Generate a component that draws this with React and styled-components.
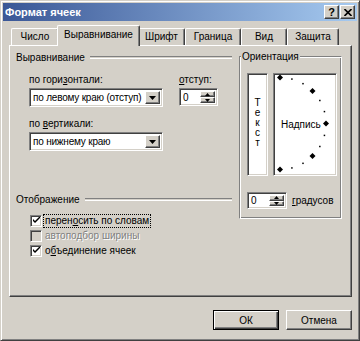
import React from "react";
import styled, { createGlobalStyle } from "styled-components";

const GlobalStyle = createGlobalStyle`
  html, body { margin: 0; padding: 0; background: #d4d0c8; }
  body {
    font-family: "Liberation Sans", Arial, sans-serif;
    font-size: 10px;
    color: #000;
  }
`;

const raised = `
  border: 1px solid;
  border-color: #fff #404040 #404040 #fff;
  box-shadow: inset -1px -1px #808080;
`;

const sunken = `
  border: 1px solid;
  border-color: #808080 #fff #fff #808080;
  box-shadow: inset 1px 1px #404040, inset -1px -1px #d4d0c8;
`;

const Window = styled.div`
  box-sizing: border-box;
  width: 360px;
  height: 341px;
  background: #d4d0c8;
  border: 1px solid;
  border-color: #d4d0c8 #404040 #404040 #d4d0c8;
  box-shadow: inset 1px 1px #fff, inset -1px -1px #808080;
  padding: 2px;
  display: flex;
  flex-direction: column;
`;

const TitleBar = styled.div`
  height: 18px;
  flex: 0 0 18px;
  display: flex;
  align-items: center;
  padding: 0 2px 0 2px;
  background: linear-gradient(to right, #3a5796, #a6caf0);
`;

const Title = styled.div`
  flex: 1;
  color: #fff;
  font-weight: bold;
  font-size: 11px;
`;

const CaptionButtons = styled.div`
  display: flex;
  gap: 1px;
`;

const CaptionButton = styled.div`
  box-sizing: border-box;
  width: 15px;
  height: 14px;
  background: #d4d0c8;
  ${raised}
  display: flex;
  align-items: center;
  justify-content: center;
  font-weight: bold;
  font-size: 11px;
  line-height: 1;
`;

const Body = styled.div`
  flex: 1;
  display: flex;
  flex-direction: column;
  padding: 4px 5px 0 6px;
`;

const TabRow = styled.div`
  position: relative;
  z-index: 1;
  height: 20px;
  display: flex;
  align-items: flex-end;
  padding-left: 2px;
`;

const Tab = styled.div`
  box-sizing: border-box;
  width: ${(p) => p.$w}px;
  height: ${(p) => (p.$active ? 21 : 17)}px;
  margin: ${(p) => (p.$active ? "0 -2px -1px -2px" : "0")};
  padding: ${(p) => (p.$active ? "0 2px 3px" : "0 0 1px")};
  position: relative;
  z-index: ${(p) => (p.$active ? 2 : 1)};
  background: #d4d0c8;
  border-top: 1px solid #fff;
  border-left: 1px solid #fff;
  border-right: 1px solid #404040;
  box-shadow: inset -1px 0 #808080;
  border-top-left-radius: 2px;
  border-top-right-radius: 2px;
  display: flex;
  align-items: center;
  justify-content: center;
  white-space: nowrap;
`;

const Panel = styled.div`
  box-sizing: border-box;
  width: 343px;
  height: 252px;
  flex: 0 0 252px;
  border: 1px solid;
  border-color: #fff #404040 #404040 #fff;
  box-shadow: inset -1px -1px #808080;
  padding: 5px 0 0 6px;
  display: grid;
  grid-template-columns: 216px 103px;
  column-gap: 7px;
  align-items: start;
`;

const Column = styled.div`
  display: flex;
  flex-direction: column;
`;

const Heading = styled.div`
  display: flex;
  align-items: center;
  height: 13px;
  margin-top: ${(p) => p.$mt || 0}px;
  white-space: nowrap;
  &::after {
    content: "";
    flex: 1;
    margin-left: 5px;
    height: 1px;
    border-top: 1px solid #808080;
    border-bottom: 1px solid #fff;
  }
`;

const FieldGrid = styled.div`
  display: grid;
  grid-template-columns: 134px 39px;
  column-gap: 16px;
  row-gap: 2px;
  margin: 9px 0 0 13px;
`;

const Field = styled.div`
  display: flex;
  flex-direction: column;
  gap: 2px;
  margin: ${(p) => p.$m || "0"};
`;

const Label = styled.div`
  height: 13px;
  line-height: 13px;
  white-space: nowrap;
  color: ${(p) => (p.$disabled ? "#808080" : "#000")};
  text-shadow: ${(p) => (p.$disabled ? "1px 1px #fff" : "none")};
`;

const SelectBox = styled.div`
  box-sizing: border-box;
  width: ${(p) => p.$w}px;
  height: ${(p) => p.$h}px;
  background: #fff;
  ${sunken}
  padding: 2px;
  display: flex;
  align-items: center;
`;

const SelectText = styled.div`
  flex: 1;
  padding-left: 1px;
  white-space: nowrap;
  overflow: hidden;
  letter-spacing: -0.2px;
`;

const DropButton = styled.div`
  box-sizing: border-box;
  width: 15px;
  align-self: stretch;
  background: #d4d0c8;
  ${raised}
  display: flex;
  align-items: center;
  justify-content: center;
`;

const SpinButtons = styled.div`
  width: 15px;
  align-self: stretch;
  display: flex;
  flex-direction: column;
`;

const SpinHalf = styled.div`
  box-sizing: border-box;
  flex: 1;
  background: #d4d0c8;
  ${raised}
  display: flex;
  align-items: center;
  justify-content: center;
`;

const Checks = styled.div`
  display: flex;
  flex-direction: column;
  margin: 7px 0 0 14px;
`;

const CheckRow = styled.div`
  height: 15px;
  display: flex;
  align-items: center;
  gap: 3px;
`;

const CheckBox = styled.div`
  box-sizing: border-box;
  width: 12px;
  height: 12px;
  background: ${(p) => (p.$disabled ? "#d4d0c8" : "#fff")};
  ${sunken}
  display: flex;
  align-items: center;
  justify-content: center;
`;

const FocusLabel = styled.div`
  outline: 1px dotted #000;
  outline-offset: 0;
  padding: 0 1px;
  margin-left: -1px;
  line-height: 12px;
  white-space: nowrap;
`;

const GroupBox = styled.div`
  position: relative;
  box-sizing: border-box;
  height: 163px;
  margin-top: 5px;
  border: 1px solid #808080;
  border-right-color: #fff;
  border-bottom-color: #fff;
  box-shadow: inset 1px 1px #fff, inset -1px -1px #808080;
  padding: 16px 4px 0 7px;
  display: flex;
  flex-direction: column;
`;

const Legend = styled.div`
  position: absolute;
  top: -7px;
  left: 1px;
  padding: 0 1px;
  background: #d4d0c8;
  line-height: 13px;
`;

const OrientRow = styled.div`
  display: flex;
  gap: 5px;
  height: 103px;
`;

const VerticalBox = styled.div`
  box-sizing: border-box;
  width: 21px;
  background: #fff;
  ${sunken}
  display: flex;
  flex-direction: column;
  align-items: center;
  justify-content: center;
  padding-bottom: 4px;
  line-height: 10px;
`;

const DialBox = styled.div`
  position: relative;
  box-sizing: border-box;
  width: 64px;
  background: #fff;
  ${sunken}
  display: flex;
  align-items: center;
  padding-left: 7px;
`;

const DialArt = styled.svg`
  position: absolute;
  left: 0;
  top: 0;
`;

const DialText = styled.span`
  position: relative;
  line-height: 12px;
`;

const DegreeRow = styled.div`
  display: flex;
  align-items: center;
  gap: 5px;
  margin-top: 16px;
`;

const ButtonRow = styled.div`
  display: flex;
  justify-content: flex-end;
  gap: 7px;
  margin-top: 13px;
`;

const PushButton = styled.div`
  box-sizing: border-box;
  width: 66px;
  height: 20px;
  display: flex;
  align-items: center;
  justify-content: center;
  background: #d4d0c8;
  ${(p) =>
    p.$default
      ? `border: 1px solid #000;
         box-shadow: inset 1px 1px #fff, inset -1px -1px #404040, inset -2px -2px #808080;`
      : raised}
`;

const DownArrow = ({ w = 7 }) => (
  <svg width={w} height={Math.ceil(w / 2)} viewBox={`0 0 ${w} ${Math.ceil(w / 2)}`}>
    <polygon points={`0,0 ${w},0 ${w / 2},${Math.ceil(w / 2)}`} fill="#000" />
  </svg>
);

const UpArrow = ({ w = 5 }) => (
  <svg width={w} height={Math.ceil(w / 2)} viewBox={`0 0 ${w} ${Math.ceil(w / 2)}`}>
    <polygon points={`0,${Math.ceil(w / 2)} ${w},${Math.ceil(w / 2)} ${w / 2},0`} fill="#000" />
  </svg>
);

const Check = ({ color = "#000" }) => (
  <svg width="7" height="7" viewBox="0 0 7 7">
    <path d="M0 2 L0 4 L2 6 L7 1 L7 -1 L2 4 Z" fill={color} />
  </svg>
);

const Spin = ({ w, h, value }) => (
  <SelectBox $w={w} $h={h}>
    <SelectText>{value}</SelectText>
    <SpinButtons>
      <SpinHalf>
        <UpArrow />
      </SpinHalf>
      <SpinHalf>
        <DownArrow w={5} />
      </SpinHalf>
    </SpinButtons>
  </SelectBox>
);

const Select = ({ value }) => (
  <SelectBox $w={134} $h={19}>
    <SelectText>{value}</SelectText>
    <DropButton>
      <DownArrow />
    </DropButton>
  </SelectBox>
);

// dots on the orientation dial, every 15 degrees
const cx = 6;
const cy = 49.5;
const r = 46;
const dots = [];
for (let a = 90; a >= -90; a -= 15) {
  const rad = (a * Math.PI) / 180;
  const x = cx + r * Math.cos(rad);
  const y = cy - r * Math.sin(rad);
  dots.push({ x, y, big: a % 45 === 0 });
}

const tabs = [
  { label: "Число", w: 48 },
  { label: "Выравнивание", w: 83, active: true },
  { label: "Шрифт", w: 47 },
  { label: "Граница", w: 56 },
  { label: "Вид", w: 46 },
  { label: "Защита", w: 52 },
];

export default function App() {
  return (
    <>
      <GlobalStyle />
      <Window>
        <TitleBar>
          <Title>Формат ячеек</Title>
          <CaptionButtons>
            <CaptionButton>?</CaptionButton>
            <CaptionButton>
              <svg width="8" height="7" viewBox="0 0 8 7">
                <path d="M0.5 0 L7.5 7 M7.5 0 L0.5 7" stroke="#000" strokeWidth="1.6" />
              </svg>
            </CaptionButton>
          </CaptionButtons>
        </TitleBar>

        <Body>
          <TabRow>
            {tabs.map((t) => (
              <Tab key={t.label} $w={t.w} $active={t.active}>
                {t.label}
              </Tab>
            ))}
          </TabRow>

          <Panel>
            <Column>
              <Heading>Выравнивание</Heading>
              <FieldGrid>
                <Label>
                  по гори<u>з</u>онтали:
                </Label>
                <Label>
                  <u>о</u>тступ:
                </Label>
                <Select value="по левому краю (отступ)" />
                <Spin w={39} h={18} value="0" />
              </FieldGrid>
              <Field $m="10px 0 0 13px">
                <Label>
                  по <u>в</u>ертикали:
                </Label>
                <Select value="по нижнему краю" />
              </Field>

              <Heading $mt={42}>Отображение</Heading>
              <Checks>
                <CheckRow>
                  <CheckBox>
                    <Check />
                  </CheckBox>
                  <FocusLabel>
                    перен<u>о</u>сить по словам
                  </FocusLabel>
                </CheckRow>
                <CheckRow>
                  <CheckBox $disabled />
                  <Label $disabled>автоподбор ширины</Label>
                </CheckRow>
                <CheckRow>
                  <CheckBox>
                    <Check />
                  </CheckBox>
                  <Label>
                    о<u>б</u>ъединение ячеек
                  </Label>
                </CheckRow>
              </Checks>
            </Column>

            <GroupBox>
              <Legend>Ориентация</Legend>
              <OrientRow>
                <VerticalBox>
                  {"Текст".split("").map((c, i) => (
                    <span key={i}>{c}</span>
                  ))}
                </VerticalBox>
                <DialBox>
                  <DialArt width="60" height="99" viewBox="0 0 60 99">
                    {dots.map((d, i) =>
                      d.big ? (
                        <polygon
                          key={i}
                          points={`${d.x},${d.y - 3} ${d.x + 3},${d.y} ${d.x},${d.y + 3} ${d.x - 3},${d.y}`}
                          fill="#000"
                        />
                      ) : (
                        <rect key={i} x={d.x - 0.75} y={d.y - 0.75} width="1.5" height="1.5" fill="#000" />
                      )
                    )}
                  </DialArt>
                  <DialText>Надпись</DialText>
                </DialBox>
              </OrientRow>
              <DegreeRow>
                <Spin w={40} h={17} value="0" />
                <Label>
                  <u>г</u>радусов
                </Label>
              </DegreeRow>
            </GroupBox>
          </Panel>

          <ButtonRow>
            <PushButton $default>ОК</PushButton>
            <PushButton>Отмена</PushButton>
          </ButtonRow>
        </Body>
      </Window>
    </>
  );
}
